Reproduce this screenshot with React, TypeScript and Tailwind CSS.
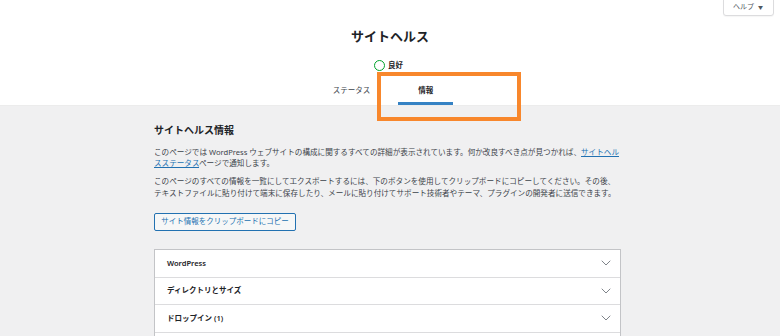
import { ChevronDown } from 'lucide-react';

const rows = ['WordPress', 'ディレクトリとサイズ', 'ドロップイン (1)'];

function HelpButton() {
  return (
    <div className="absolute top-[-1px] right-[6px] h-[17px] pl-[9px] pr-[10px] flex items-center gap-[4px] bg-white border border-[#dcdcde] rounded-b-[3px] shadow-[0_1px_1px_rgba(0,0,0,0.04)] text-[7px] text-[#50575e]">
      <span>ヘルプ</span>
      <span className="text-[5px]">▼</span>
    </div>
  );
}

export default function App() {
  return (
    <div className="relative w-[780px] h-[336px] overflow-hidden bg-[#f0f0f1] font-['Noto_Sans','Noto_Sans_CJK_JP',sans-serif] text-[#1d2327]">
      <HelpButton />

      {/* header */}
      <div className="h-[106px] bg-white border-b border-[#ececec] flex flex-col items-center pt-[28px]">
        <h1 className="h-[16px] leading-[16px] text-[13px] font-bold">サイトヘルス</h1>
        <div className="mt-[16px] h-[12px] flex items-center gap-[3px] pr-[3px]">
          <span className="w-[11px] h-[11px] rounded-full border-[1.5px] border-[#00a32a]" />
          <span className="text-[7.5px] font-semibold">良好</span>
        </div>
        <div className="mt-[6px] flex justify-center gap-[8px] pr-[14px]">
          <div className="h-[28px] pt-[2px] px-[20px] flex items-center border-b-[3px] border-transparent text-[7.5px] text-[#3c434a]">
            ステータス
          </div>
          <div className="h-[28px] pt-[2px] px-[20px] flex items-center border-b-[3px] border-[#3582c4] text-[7.5px] font-semibold">
            情報
          </div>
        </div>
      </div>

      {/* highlight box */}
      <div className="absolute left-[377px] top-[72px] w-[144px] h-[49px] border-[4px] border-[#f8872c]" />

      {/* content */}
      <div className="ml-[154px] w-[467px] pt-[17px]">
        <h2 className="h-[14px] leading-[14px] text-[10px] font-bold">サイトヘルス情報</h2>
        <p className="mt-[9.5px] text-[7.6px] leading-[11.5px] text-[#3c434a]">
          このページでは WordPress ウェブサイトの構成に関するすべての詳細が表示されています。何か改良すべき点が見つかれば、
          <a className="text-[#2271b1] underline">サイトヘルスステータス</a>
          ページで通知します。
        </p>
        <p className="mt-[6.5px] text-[7.6px] leading-[11.5px] text-[#3c434a]">
          このページのすべての情報を一覧にしてエクスポートするには、下のボタンを使用してクリップボードにコピーしてください。その後、テキストファイルに貼り付けて端末に保存したり、メールに貼り付けてサポート技術者やテーマ、プラグインの開発者に送信できます。
        </p>
        <button className="mt-[14px] h-[18px] w-[142px] flex items-center justify-center border border-[#2271b1] rounded-[2px] bg-[#f6f7f7] text-[7.5px] text-[#2271b1]">
          サイト情報をクリップボードにコピー
        </button>

        <div className="mt-[18px] bg-white border-x border-t border-[#c3c4c7]">
          {rows.map((r) => (
            <div
              key={r}
              className="h-[27.5px] border-b border-[#dcdcde] flex items-center justify-between pl-[12px] pr-[6px]"
            >
              <span className="text-[7.5px] font-semibold">{r}</span>
              <ChevronDown size={16} strokeWidth={1.1} className="text-[#50575e]" />
            </div>
          ))}
          {/* next section, cut off by the window */}
          <div className="h-[27.5px]" />
        </div>
      </div>
    </div>
  );
}
